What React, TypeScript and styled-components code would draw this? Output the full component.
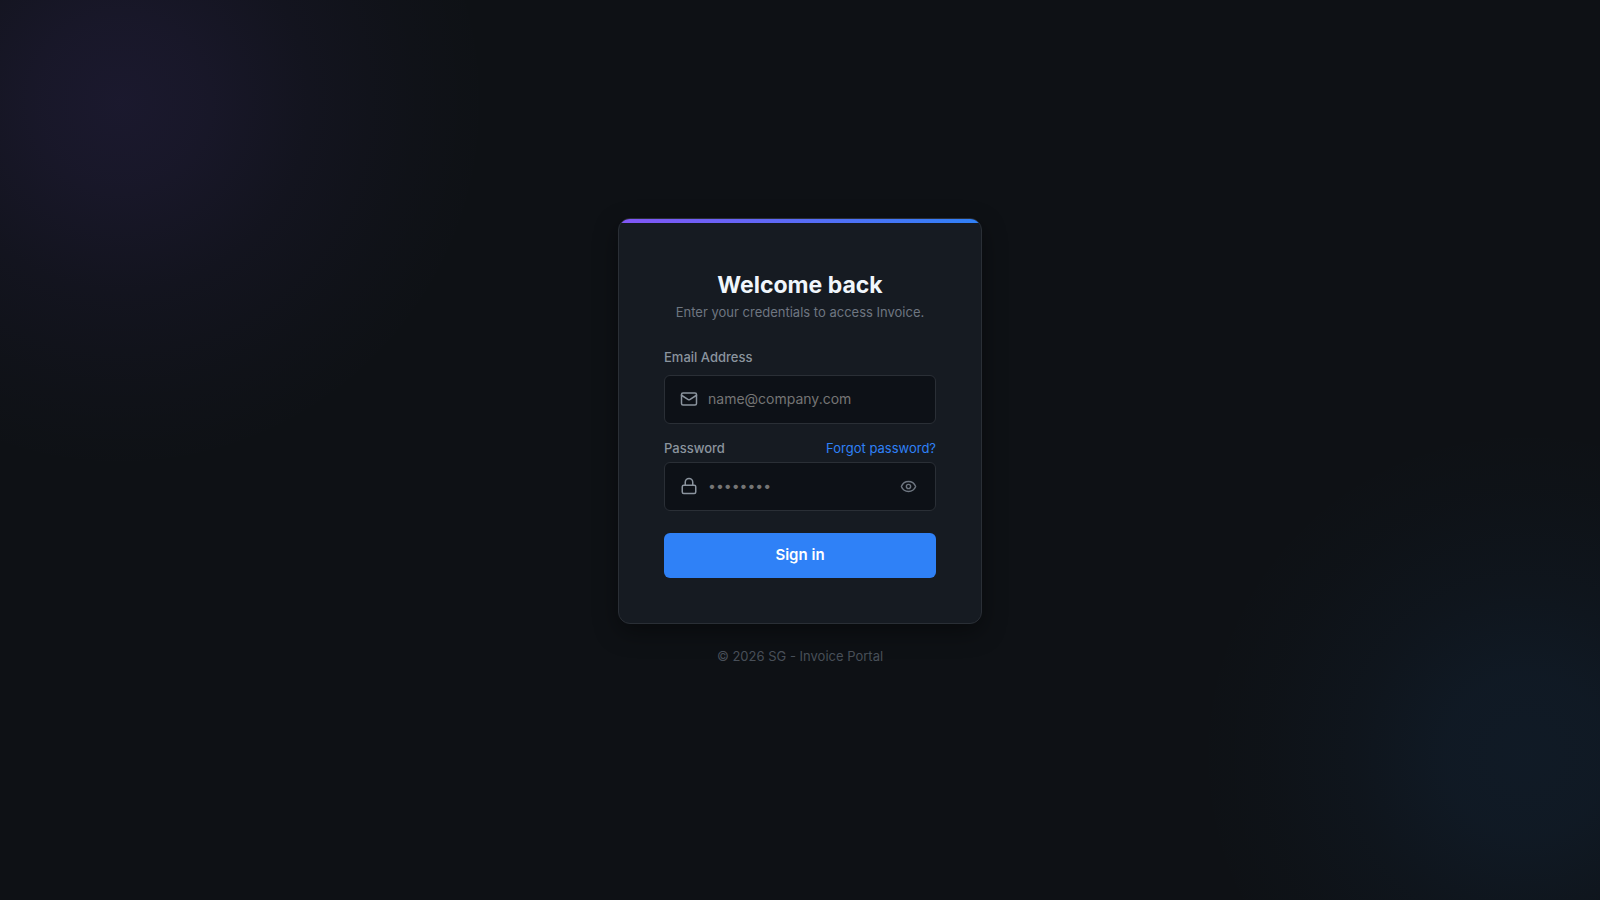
import React, { useState } from "react";
import styled, { createGlobalStyle } from "styled-components";
import { Eye, Lock, Mail } from "lucide-react";

const GlobalStyle = createGlobalStyle`
  *, *::before, *::after { box-sizing: border-box; }
  body {
    margin: 0;
    background: #0e1115;
    font-family: Inter, "Liberation Sans", sans-serif;
  }
`;

const Page = styled.div`
  min-height: 100vh;
  display: flex;
  flex-direction: column;
  align-items: center;
  justify-content: center;
  padding: 24px 16px;
  background:
    radial-gradient(
      circle 370px at 120px 102px,
      rgba(130, 87, 246, 0.11) 0,
      rgba(130, 87, 246, 0.09) 80px,
      rgba(130, 87, 246, 0.045) 190px,
      rgba(130, 87, 246, 0.015) 290px,
      rgba(130, 87, 246, 0) 370px
    ),
    radial-gradient(
      circle 330px at calc(100% - 74px) calc(100% - 145px),
      rgba(40, 135, 235, 0.08) 0,
      rgba(40, 135, 235, 0.07) 80px,
      rgba(40, 135, 235, 0.035) 170px,
      rgba(40, 135, 235, 0.012) 260px,
      rgba(40, 135, 235, 0) 330px
    ),
    #0e1115;
`;

const Card = styled.main`
  width: 100%;
  max-width: 364px;
  border: 1px solid #2a2f36;
  border-radius: 12px;
  overflow: hidden;
  background: #161b22;
  box-shadow: 0 8px 24px rgba(0, 0, 0, 0.4);
`;

const Accent = styled.div`
  height: 4px;
  background: linear-gradient(90deg, #8256f6, #2f81f7);
`;

const Content = styled.div`
  padding: 45px;
`;

const Title = styled.h1`
  margin: 0;
  font-size: 23px;
  font-weight: 700;
  line-height: 34px;
  text-align: center;
  color: #f0f6fc;
`;

const Subtitle = styled.p`
  margin: 0 0 25px;
  font-size: 13px;
  line-height: 20px;
  text-align: center;
  white-space: nowrap;
  color: #6e7681;
`;

const Field = styled.div<{ $gap: number }>`
  display: flex;
  flex-direction: column;
  gap: ${(p) => p.$gap}px;
  margin-bottom: 14px;
`;

const LabelRow = styled.div`
  display: flex;
  justify-content: space-between;
  font-size: 13px;
  line-height: 20px;
`;

const Label = styled.label`
  font-weight: 500;
  color: #8b949e;
`;

const ForgotLink = styled.a`
  color: #2f81f7;
  text-decoration: none;
`;

const InputBox = styled.div`
  display: flex;
  align-items: center;
  gap: 10px;
  height: 49px;
  padding: 0 18px 0 15px;
  border: 1px solid #2a2f36;
  border-radius: 6px;
  background: #0d1117;
  color: #8b949e;

  &:focus-within { border-color: #2f81f7; }
  svg { flex: none; }
`;

const Input = styled.input`
  flex: 1;
  min-width: 0;
  padding: 0;
  border: 0;
  outline: 0;
  background: transparent;
  color: #f0f6fc;
  font: 400 14px/24px Inter, "Liberation Sans", sans-serif;

  &::placeholder { color: #757575; opacity: 1; }
`;

const IconButton = styled.button`
  display: flex;
  padding: 0;
  border: 0;
  background: transparent;
  color: #6e7681;
  cursor: pointer;
`;

const SubmitButton = styled.button`
  width: 100%;
  height: 45px;
  margin-top: 8px;
  border: 0;
  border-radius: 6px;
  background: #2f81f7;
  color: #fff;
  font: 600 15px/24px Inter, "Liberation Sans", sans-serif;
  cursor: pointer;
`;

const Footer = styled.footer`
  padding: 22px 0 17px;
  font-size: 13px;
  line-height: 20px;
  color: #484f58;
`;

export default function App() {
  const [visible, setVisible] = useState(false);

  return (
    <>
      <GlobalStyle />
      <Page>
        <Card>
          <Accent />
          <Content>
            <Title>Welcome back</Title>
            <Subtitle>Enter your credentials to access Invoice.</Subtitle>
            <form onSubmit={(e) => e.preventDefault()}>
              <Field $gap={8}>
                <LabelRow>
                  <Label htmlFor="email">Email Address</Label>
                </LabelRow>
                <InputBox>
                  <Mail size={18} aria-hidden />
                  <Input id="email" type="email" placeholder="name@company.com" />
                </InputBox>
              </Field>
              <Field $gap={4}>
                <LabelRow>
                  <Label htmlFor="password">Password</Label>
                  <ForgotLink href="#forgot">Forgot password?</ForgotLink>
                </LabelRow>
                <InputBox>
                  <Lock size={18} aria-hidden />
                  <Input
                    id="password"
                    type={visible ? "text" : "password"}
                    placeholder="••••••••"
                  />
                  <IconButton
                    type="button"
                    aria-label="Show password"
                    onClick={() => setVisible(!visible)}
                  >
                    <Eye size={17} aria-hidden />
                  </IconButton>
                </InputBox>
              </Field>
              <SubmitButton type="submit">Sign in</SubmitButton>
            </form>
          </Content>
        </Card>
        <Footer>© 2026 SG - Invoice Portal</Footer>
      </Page>
    </>
  );
}
